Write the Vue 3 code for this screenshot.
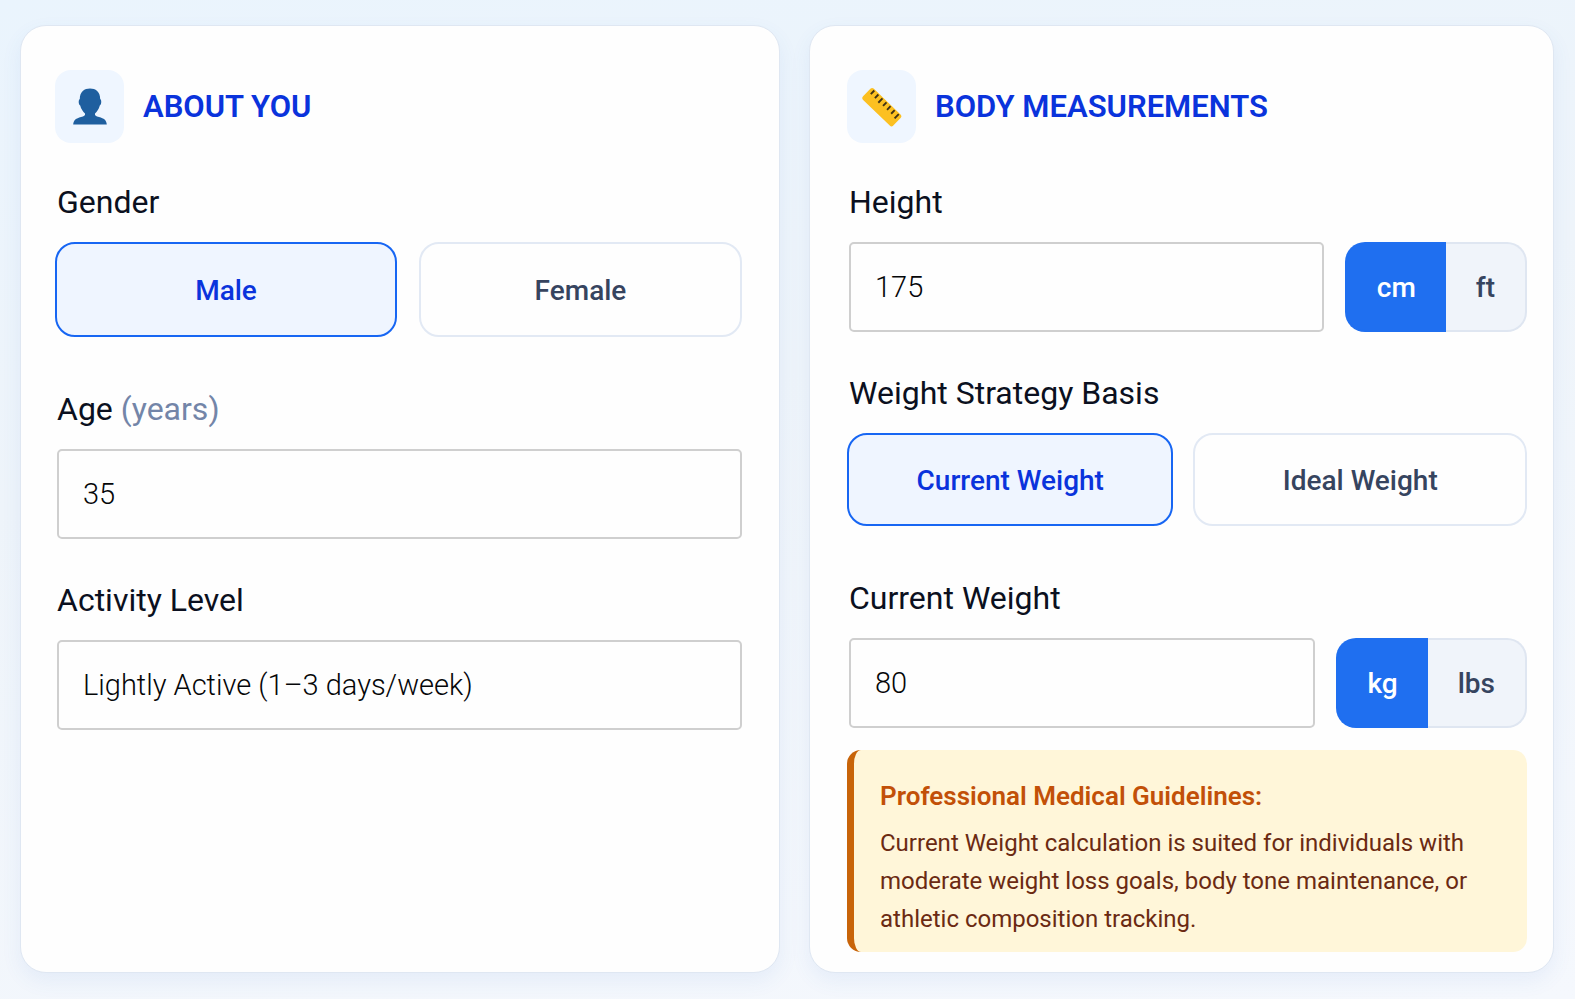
<template>
  <main class="page">
    <section class="card card-about">
      <header class="card-header">
        <span class="card-icon">
          <svg viewBox="0 0 34 37" width="34" height="37" aria-hidden="true">
            <path d="M17 0.500C22.500 0.500 27.200 3.500 27.200 11C28.800 11.500 28.600 17 26.800 17.500C26 21 24 23.500 22 25.500C21.500 27.500 23 28.200 26 29C31 30.400 33.500 32 33.800 36.500H0.200C0.500 32 3 30.400 8 29C11 28.200 12.500 27.500 12 25.500C10 23.500 8 21 7.200 17.500C5.400 17 5.200 11.500 6.800 11C6.800 3.500 11.500 0.500 17 0.500Z" fill="#1f5f9f" />
          </svg>
        </span>
        <h2>ABOUT YOU</h2>
      </header>

      <div class="field">
        <span id="gender-label" class="label">Gender</span>
        <div class="choices choices-gender" role="group" aria-labelledby="gender-label">
          <button
            v-for="g in genders"
            :key="g"
            type="button"
            class="choice"
            :class="{ active: gender === g }"
            @click="gender = g"
          >{{ g }}</button>
        </div>
      </div>

      <div class="field">
        <label class="label" for="age">Age <span class="hint">(years)</span></label>
        <input id="age" v-model="age" class="control" type="text" inputmode="numeric" />
      </div>

      <div class="field">
        <label class="label" for="activity">Activity Level</label>
        <select id="activity" v-model="activity" class="control">
          <option v-for="a in activities" :key="a" :value="a">{{ a }}</option>
        </select>
      </div>
    </section>

    <section class="card card-body">
      <header class="card-header">
        <span class="card-icon">
          <svg viewBox="0 0 40 40" width="40" height="40" aria-hidden="true">
            <g transform="translate(20 20) rotate(44)">
              <rect x="-21" y="-7.500" width="42" height="15.500" rx="2.500" fill="#fcc021" />
              <path d="M-17 -6.500v5M-11.300 -6.500v5M-5.600 -6.500v6M0 -6.500v5M5.600 -6.500v5M11.300 -6.500v5M17 -6.500v6" stroke="#3f3216" stroke-width="1.900" fill="none" />
            </g>
          </svg>
        </span>
        <h2>BODY MEASUREMENTS</h2>
      </header>

      <div class="field">
        <label class="label" for="height">Height</label>
        <div class="measure">
          <input id="height" v-model="height" class="control" type="text" inputmode="numeric" />
          <div class="units" role="group" aria-label="Height unit">
            <button
              v-for="u in heightUnits"
              :key="u"
              type="button"
              :class="{ active: heightUnit === u }"
              @click="heightUnit = u"
            >{{ u }}</button>
          </div>
        </div>
      </div>

      <div class="field">
        <span id="basis-label" class="label">Weight Strategy Basis</span>
        <div class="choices choices-basis" role="group" aria-labelledby="basis-label">
          <button
            v-for="b in bases"
            :key="b"
            type="button"
            class="choice"
            :class="{ active: basis === b }"
            @click="basis = b"
          >{{ b }}</button>
        </div>
      </div>

      <div class="field">
        <label class="label" for="weight">{{ basis }}</label>
        <div class="measure">
          <input id="weight" v-model="weight" class="control" type="text" inputmode="numeric" />
          <div class="units" role="group" aria-label="Weight unit">
            <button
              v-for="u in weightUnits"
              :key="u"
              type="button"
              :class="{ active: weightUnit === u }"
              @click="weightUnit = u"
            >{{ u }}</button>
          </div>
        </div>
      </div>

      <aside class="note">
        <strong>Professional Medical Guidelines:</strong>
        <p>{{ guideline }}</p>
      </aside>
    </section>
  </main>
</template>

<script setup>
import { computed, ref } from 'vue'

const genders = ['Male', 'Female']
const heightUnits = ['cm', 'ft']
const weightUnits = ['kg', 'lbs']
const bases = ['Current Weight', 'Ideal Weight']
const activities = ['Lightly Active (1–3 days/week)']

const gender = ref('Male')
const age = ref('35')
const activity = ref(activities[0])
const height = ref('175')
const heightUnit = ref('cm')
const basis = ref('Current Weight')
const weight = ref('80')
const weightUnit = ref('kg')

const guideline = computed(
  () => `${basis.value} calculation is suited for individuals with moderate weight loss goals, body tone maintenance, or athletic composition tracking.`
)
</script>

<style>
body { margin: 0; }
</style>

<style scoped>
.page {
  box-sizing: border-box;
  min-height: 100vh;
  padding: 25px 21px 26px 20px;
  display: grid;
  grid-template-columns: 760fr 745fr;
  gap: 29px;
  background: linear-gradient(170deg, #eaf4fd 0%, #eef4fa 40%, #f5f8fd 100%);
  font-family: Roboto, "Liberation Sans", sans-serif;
}
.card {
  box-sizing: border-box;
  min-width: 0;
  border: 1px solid #dfe7f2;
  border-radius: 26px;
  background: #fefefe;
  box-shadow: 0 8px 20px rgba(60, 110, 200, 0.08);
}
.card-about { padding: 44px 37px 20px 34px; }
.card-body { padding: 44px 26px 20px 37px; }

.card-header { display: flex; align-items: center; gap: 19px; margin-bottom: 39px; }
.card-icon {
  display: flex;
  align-items: center;
  justify-content: center;
  width: 69px;
  height: 73px;
  border-radius: 16px;
  background: #eff6ff;
}
h2 { margin: 0; font-size: 31px; line-height: 40px; font-weight: 600; color: #0a33dc; }

.label { display: block; margin-bottom: 20px; padding-left: 2px; font-size: 32px; line-height: 40px; color: #0b1020; }
.hint { color: #7385a8; }

.choices { display: grid; margin-bottom: 52px; }
.choices-gender { grid-template-columns: 342fr 323fr; grid-auto-rows: 95px; gap: 22px; }
.choices-basis { grid-template-columns: 326fr 333fr; grid-auto-rows: 93px; gap: 20px; }
.choice {
  padding: 2px 0 0;
  border: 2px solid #e2e9f4;
  border-radius: 20px;
  background: #fefefe;
  color: #36445f;
  font: 500 28px/36px Roboto, "Liberation Sans", sans-serif;
  cursor: pointer;
}
.choice.active { border-color: #1766f3; background: #eff5ff; color: #0a33dc; }

.control {
  box-sizing: border-box;
  display: block;
  width: calc(100% - 2px);
  height: 90px;
  margin: 0 0 41px 2px;
  padding: 0 24px;
  border: 2px solid #cfcfcf;
  border-radius: 5px;
  background: #fefefe;
  color: #050608;
  font: 300 29px/36px Roboto, "Liberation Sans", sans-serif;
  appearance: none;
}
.measure { display: flex; gap: 21px; margin-bottom: 41px; }
.measure .control { flex: 1; min-width: 0; margin-bottom: 0; }
.units { display: flex; }
.units button {
  padding: 2px 30px 0;
  border: 2px solid #dfe6f1;
  border-left: 0;
  border-radius: 0 20px 20px 0;
  background: #f0f4fa;
  color: #36445f;
  font: 500 28px/36px Roboto, "Liberation Sans", sans-serif;
  cursor: pointer;
}
.units button:first-child { border-left: 2px solid #dfe6f1; border-right: 0; border-radius: 20px 0 0 20px; }
.units button.active { border-color: #1f6ff0; background: #1f6ff0; color: #fff; }

.note {
  margin-top: -19px;
  padding: 26px 26px 14px;
  border-left: 7px solid #c86409;
  border-radius: 14px;
  background: #fff6d9;
}
.note strong { display: block; margin-bottom: 8px; font-size: 26px; line-height: 40px; font-weight: 600; color: #c25008; }
.note p { margin: 0; font-size: 24px; line-height: 38px; color: #6b2a12; }
</style>
